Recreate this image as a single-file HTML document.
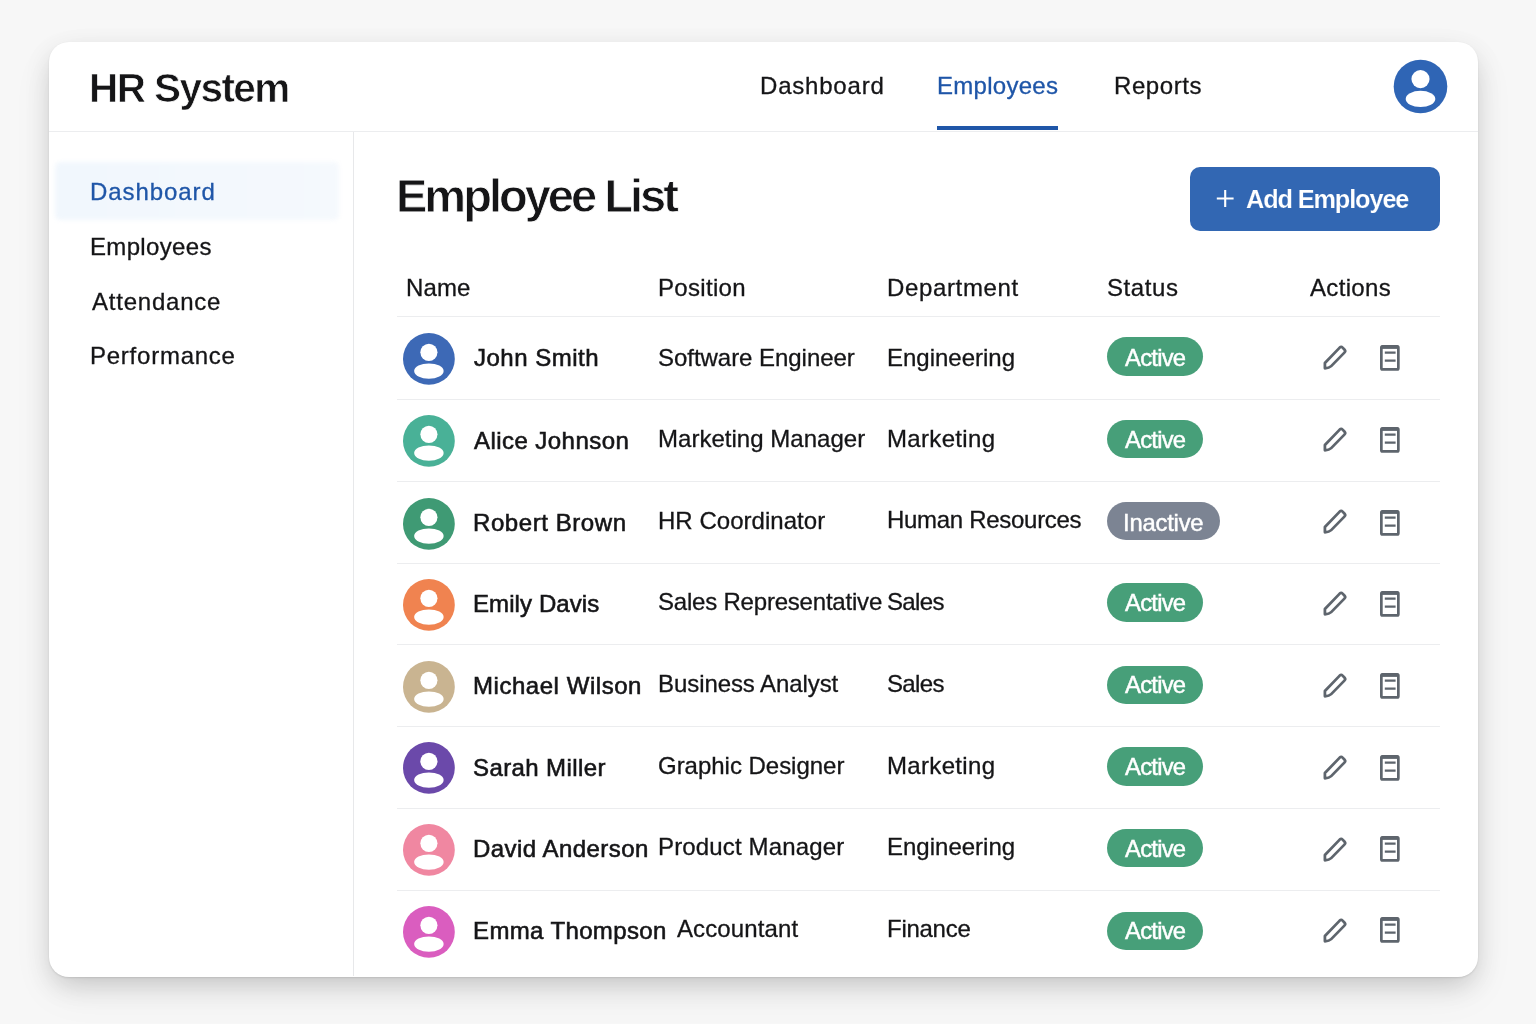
<!DOCTYPE html>
<html lang="en"><head><meta charset="utf-8"><title>HR System - Employee List</title>
<style>
html,body{margin:0;padding:0}
body{width:1536px;height:1024px;overflow:hidden;background:#f7f7f7;font-family:"Liberation Sans",Arial,sans-serif;color:#151517;position:relative}
.abs{position:absolute}
.t{position:absolute;white-space:nowrap;line-height:1;font-size:24px;will-change:transform;-webkit-text-stroke:.3px currentColor}
.card{position:absolute;left:49px;top:42px;width:1429px;height:934.5px;background:#fff;border-radius:20px;box-shadow:0 1px 2px rgba(0,0,0,.10),0 10px 28px -4px rgba(0,0,0,.19),0 16px 44px rgba(0,0,0,.05)}
.hline{position:absolute;height:1.2px;background:#ecedef}
.vline{position:absolute;width:1.1px;background:#e7e8ea}
.badge{position:absolute;border-radius:20px}
</style></head><body>
<div class="card"></div>
<div class="hline" style="left:49px;top:130.9px;width:1429px"></div>
<div class="vline" style="left:353.4px;top:132px;height:844px"></div>
<div class="abs" style="left:937.2px;top:126.2px;width:120.8px;height:3.8px;background:#1f56a8"></div>

<svg class="abs" style="left:1392px;top:58px" width="57" height="57" viewBox="-28.5 -28.5 57 57"><circle r="26.8" fill="#2f65b5"/><circle cy="-7.4" r="9.05" fill="#fff"/><ellipse cy="12.4" rx="14.8" ry="8.1" fill="#fff"/></svg>
<div class="abs" style="left:55px;top:161.5px;width:284px;height:58.5px;background:linear-gradient(90deg,#f1f7fd,#f5f9fd);border-radius:5px;filter:blur(2px)"></div>
<div class="abs" style="left:1190.4px;top:166.9px;width:249.6px;height:63.9px;border-radius:10px;background:#3267b3"></div>
<svg class="abs" style="left:1216.1px;top:189px" width="19" height="19" viewBox="0 0 19 19"><path d="M9.2 0.9V18.1M0.8 9.5H17.6" stroke="#fff" stroke-width="2.1"/></svg>

<div class="hline" style="left:397px;top:315.70px;width:1043px"></div>
<div class="hline" style="left:397px;top:399.10px;width:1043px"></div>
<div class="hline" style="left:397px;top:481.10px;width:1043px"></div>
<div class="hline" style="left:397px;top:562.90px;width:1043px"></div>
<div class="hline" style="left:397px;top:644.10px;width:1043px"></div>
<div class="hline" style="left:397px;top:725.90px;width:1043px"></div>
<div class="hline" style="left:397px;top:808.20px;width:1043px"></div>
<div class="hline" style="left:397px;top:890.30px;width:1043px"></div>
<svg class="abs" style="left:402.1px;top:331.5px" width="53.8" height="53.8" viewBox="-26.9 -26.9 53.8 53.8"><circle r="25.9" fill="#3d69b6"/><circle cy="-6.57" r="8.57" fill="#fff"/><ellipse cy="12.15" rx="14.74" ry="7.67" fill="#fff"/></svg>
<div class="badge" style="left:1106.9px;top:336.9px;width:96.5px;height:38.9px;background:#479f79"></div>
<svg class="abs" style="left:1320.6px;top:342.7px" width="28" height="29" viewBox="-2 -2 28 29"><path d="M1.9 23.3 L1.9 18.0 L16.7 2.6 Q18.2 1.2 19.6 2.6 L21.6 4.7 Q22.9 6.1 21.4 7.6 L8.2 21.1 Q6.2 23.1 1.9 23.3 Z" fill="none" stroke="#5e656d" stroke-width="2.75" stroke-linejoin="round"/></svg>
<svg class="abs" style="left:1378.3px;top:342.9px" width="24" height="30" viewBox="-2 -2 24 30"><rect x="1.35" y="1.35" width="17" height="23" rx="1.2" fill="none" stroke="#5e656d" stroke-width="2.7"/><path d="M1.4 2.2 H18.3" stroke="#5e656d" stroke-width="3.4"/><path d="M4.8 7.6 H15.6 M4.8 15.6 H15.6" stroke="#5e656d" stroke-width="2.3"/></svg>
<svg class="abs" style="left:402.1px;top:414.1px" width="53.8" height="53.8" viewBox="-26.9 -26.9 53.8 53.8"><circle r="25.9" fill="#49b197"/><circle cy="-6.57" r="8.57" fill="#fff"/><ellipse cy="12.15" rx="14.74" ry="7.67" fill="#fff"/></svg>
<div class="badge" style="left:1106.9px;top:420.3px;width:96.5px;height:38.0px;background:#479f79"></div>
<svg class="abs" style="left:1320.6px;top:425.1px" width="28" height="29" viewBox="-2 -2 28 29"><path d="M1.9 23.3 L1.9 18.0 L16.7 2.6 Q18.2 1.2 19.6 2.6 L21.6 4.7 Q22.9 6.1 21.4 7.6 L8.2 21.1 Q6.2 23.1 1.9 23.3 Z" fill="none" stroke="#5e656d" stroke-width="2.75" stroke-linejoin="round"/></svg>
<svg class="abs" style="left:1378.3px;top:425.1px" width="24" height="30" viewBox="-2 -2 24 30"><rect x="1.35" y="1.35" width="17" height="23" rx="1.2" fill="none" stroke="#5e656d" stroke-width="2.7"/><path d="M1.4 2.2 H18.3" stroke="#5e656d" stroke-width="3.4"/><path d="M4.8 7.6 H15.6 M4.8 15.6 H15.6" stroke="#5e656d" stroke-width="2.3"/></svg>
<svg class="abs" style="left:402.1px;top:496.5px" width="53.8" height="53.8" viewBox="-26.9 -26.9 53.8 53.8"><circle r="25.9" fill="#3f9a74"/><circle cy="-6.57" r="8.57" fill="#fff"/><ellipse cy="12.15" rx="14.74" ry="7.67" fill="#fff"/></svg>
<div class="badge" style="left:1106.9px;top:502.1px;width:112.9px;height:37.7px;background:#7c8493"></div>
<svg class="abs" style="left:1320.6px;top:506.9px" width="28" height="29" viewBox="-2 -2 28 29"><path d="M1.9 23.3 L1.9 18.0 L16.7 2.6 Q18.2 1.2 19.6 2.6 L21.6 4.7 Q22.9 6.1 21.4 7.6 L8.2 21.1 Q6.2 23.1 1.9 23.3 Z" fill="none" stroke="#5e656d" stroke-width="2.75" stroke-linejoin="round"/></svg>
<svg class="abs" style="left:1378.3px;top:507.6px" width="24" height="30" viewBox="-2 -2 24 30"><rect x="1.35" y="1.35" width="17" height="23" rx="1.2" fill="none" stroke="#5e656d" stroke-width="2.7"/><path d="M1.4 2.2 H18.3" stroke="#5e656d" stroke-width="3.4"/><path d="M4.8 7.6 H15.6 M4.8 15.6 H15.6" stroke="#5e656d" stroke-width="2.3"/></svg>
<svg class="abs" style="left:402.1px;top:578.1px" width="53.8" height="53.8" viewBox="-26.9 -26.9 53.8 53.8"><circle r="25.9" fill="#f08350"/><circle cy="-6.57" r="8.57" fill="#fff"/><ellipse cy="12.15" rx="14.74" ry="7.67" fill="#fff"/></svg>
<div class="badge" style="left:1106.9px;top:583.4px;width:96.5px;height:38.7px;background:#479f79"></div>
<svg class="abs" style="left:1320.6px;top:588.9px" width="28" height="29" viewBox="-2 -2 28 29"><path d="M1.9 23.3 L1.9 18.0 L16.7 2.6 Q18.2 1.2 19.6 2.6 L21.6 4.7 Q22.9 6.1 21.4 7.6 L8.2 21.1 Q6.2 23.1 1.9 23.3 Z" fill="none" stroke="#5e656d" stroke-width="2.75" stroke-linejoin="round"/></svg>
<svg class="abs" style="left:1378.3px;top:588.7px" width="24" height="30" viewBox="-2 -2 24 30"><rect x="1.35" y="1.35" width="17" height="23" rx="1.2" fill="none" stroke="#5e656d" stroke-width="2.7"/><path d="M1.4 2.2 H18.3" stroke="#5e656d" stroke-width="3.4"/><path d="M4.8 7.6 H15.6 M4.8 15.6 H15.6" stroke="#5e656d" stroke-width="2.3"/></svg>
<svg class="abs" style="left:402.1px;top:660.1px" width="53.8" height="53.8" viewBox="-26.9 -26.9 53.8 53.8"><circle r="25.9" fill="#c9b491"/><circle cy="-6.57" r="8.57" fill="#fff"/><ellipse cy="12.15" rx="14.74" ry="7.67" fill="#fff"/></svg>
<div class="badge" style="left:1106.9px;top:665.6px;width:96.5px;height:38.0px;background:#479f79"></div>
<svg class="abs" style="left:1320.6px;top:671.0px" width="28" height="29" viewBox="-2 -2 28 29"><path d="M1.9 23.3 L1.9 18.0 L16.7 2.6 Q18.2 1.2 19.6 2.6 L21.6 4.7 Q22.9 6.1 21.4 7.6 L8.2 21.1 Q6.2 23.1 1.9 23.3 Z" fill="none" stroke="#5e656d" stroke-width="2.75" stroke-linejoin="round"/></svg>
<svg class="abs" style="left:1378.3px;top:670.8px" width="24" height="30" viewBox="-2 -2 24 30"><rect x="1.35" y="1.35" width="17" height="23" rx="1.2" fill="none" stroke="#5e656d" stroke-width="2.7"/><path d="M1.4 2.2 H18.3" stroke="#5e656d" stroke-width="3.4"/><path d="M4.8 7.6 H15.6 M4.8 15.6 H15.6" stroke="#5e656d" stroke-width="2.3"/></svg>
<svg class="abs" style="left:402.1px;top:740.9px" width="53.8" height="53.8" viewBox="-26.9 -26.9 53.8 53.8"><circle r="25.9" fill="#6b49aa"/><circle cy="-6.57" r="8.57" fill="#fff"/><ellipse cy="12.15" rx="14.74" ry="7.67" fill="#fff"/></svg>
<div class="badge" style="left:1106.9px;top:747.0px;width:96.5px;height:38.7px;background:#479f79"></div>
<svg class="abs" style="left:1320.6px;top:753.0px" width="28" height="29" viewBox="-2 -2 28 29"><path d="M1.9 23.3 L1.9 18.0 L16.7 2.6 Q18.2 1.2 19.6 2.6 L21.6 4.7 Q22.9 6.1 21.4 7.6 L8.2 21.1 Q6.2 23.1 1.9 23.3 Z" fill="none" stroke="#5e656d" stroke-width="2.75" stroke-linejoin="round"/></svg>
<svg class="abs" style="left:1378.3px;top:752.8px" width="24" height="30" viewBox="-2 -2 24 30"><rect x="1.35" y="1.35" width="17" height="23" rx="1.2" fill="none" stroke="#5e656d" stroke-width="2.7"/><path d="M1.4 2.2 H18.3" stroke="#5e656d" stroke-width="3.4"/><path d="M4.8 7.6 H15.6 M4.8 15.6 H15.6" stroke="#5e656d" stroke-width="2.3"/></svg>
<svg class="abs" style="left:402.1px;top:823.2px" width="53.8" height="53.8" viewBox="-26.9 -26.9 53.8 53.8"><circle r="25.9" fill="#f087a1"/><circle cy="-6.57" r="8.57" fill="#fff"/><ellipse cy="12.15" rx="14.74" ry="7.67" fill="#fff"/></svg>
<div class="badge" style="left:1106.9px;top:828.8px;width:96.5px;height:38.5px;background:#479f79"></div>
<svg class="abs" style="left:1320.6px;top:834.5px" width="28" height="29" viewBox="-2 -2 28 29"><path d="M1.9 23.3 L1.9 18.0 L16.7 2.6 Q18.2 1.2 19.6 2.6 L21.6 4.7 Q22.9 6.1 21.4 7.6 L8.2 21.1 Q6.2 23.1 1.9 23.3 Z" fill="none" stroke="#5e656d" stroke-width="2.75" stroke-linejoin="round"/></svg>
<svg class="abs" style="left:1378.3px;top:833.9px" width="24" height="30" viewBox="-2 -2 24 30"><rect x="1.35" y="1.35" width="17" height="23" rx="1.2" fill="none" stroke="#5e656d" stroke-width="2.7"/><path d="M1.4 2.2 H18.3" stroke="#5e656d" stroke-width="3.4"/><path d="M4.8 7.6 H15.6 M4.8 15.6 H15.6" stroke="#5e656d" stroke-width="2.3"/></svg>
<svg class="abs" style="left:402.1px;top:905.2px" width="53.8" height="53.8" viewBox="-26.9 -26.9 53.8 53.8"><circle r="25.9" fill="#da5dbf"/><circle cy="-6.57" r="8.57" fill="#fff"/><ellipse cy="12.15" rx="14.74" ry="7.67" fill="#fff"/></svg>
<div class="badge" style="left:1106.9px;top:911.5px;width:96.5px;height:38.0px;background:#479f79"></div>
<svg class="abs" style="left:1320.6px;top:915.8px" width="28" height="29" viewBox="-2 -2 28 29"><path d="M1.9 23.3 L1.9 18.0 L16.7 2.6 Q18.2 1.2 19.6 2.6 L21.6 4.7 Q22.9 6.1 21.4 7.6 L8.2 21.1 Q6.2 23.1 1.9 23.3 Z" fill="none" stroke="#5e656d" stroke-width="2.75" stroke-linejoin="round"/></svg>
<svg class="abs" style="left:1378.3px;top:915.2px" width="24" height="30" viewBox="-2 -2 24 30"><rect x="1.35" y="1.35" width="17" height="23" rx="1.2" fill="none" stroke="#5e656d" stroke-width="2.7"/><path d="M1.4 2.2 H18.3" stroke="#5e656d" stroke-width="3.4"/><path d="M4.8 7.6 H15.6 M4.8 15.6 H15.6" stroke="#5e656d" stroke-width="2.3"/></svg>
<div class="t" style="left:88.65px;top:68.12px;letter-spacing:-1.565px;font-size:40.5px;font-weight:bold;-webkit-text-stroke:.7px #fff">HR System</div>
<div class="t" style="left:760.40px;top:74.38px;letter-spacing:0.798px">Dashboard</div>
<div class="t" style="left:936.65px;top:74.38px;letter-spacing:0.285px;color:#1f56a8">Employees</div>
<div class="t" style="left:1114.15px;top:74.38px;letter-spacing:0.594px">Reports</div>
<div class="t" style="left:90.25px;top:179.88px;letter-spacing:0.930px;color:#1f56a8">Dashboard</div>
<div class="t" style="left:90.25px;top:234.68px;letter-spacing:0.335px">Employees</div>
<div class="t" style="left:91.75px;top:289.58px;letter-spacing:0.780px">Attendance</div>
<div class="t" style="left:90.25px;top:344.18px;letter-spacing:0.756px">Performance</div>
<div class="t" style="left:396.40px;top:171.91px;letter-spacing:-2.983px;font-size:47px;font-weight:bold;-webkit-text-stroke:.8px #fff">Employee List</div>
<div class="t" style="left:1245.58px;top:187.18px;letter-spacing:-1.117px;font-size:25.3px;font-weight:bold;color:#fff;-webkit-text-stroke:.15px #3267b3">Add Employee</div>
<div class="t" style="left:406.15px;top:275.68px;letter-spacing:0.143px">Name</div>
<div class="t" style="left:657.65px;top:275.68px;letter-spacing:0.309px">Position</div>
<div class="t" style="left:886.75px;top:275.68px;letter-spacing:0.642px">Department</div>
<div class="t" style="left:1106.65px;top:275.68px;letter-spacing:0.592px">Status</div>
<div class="t" style="left:1310.15px;top:275.68px;letter-spacing:0.333px">Actions</div>
<div class="t" style="left:474.04px;top:345.68px;letter-spacing:0.495px;-webkit-text-stroke:.58px #151517">John Smith</div>
<div class="t" style="left:657.65px;top:345.58px;letter-spacing:-0.041px">Software Engineer</div>
<div class="t" style="left:886.95px;top:345.58px;letter-spacing:-0.005px">Engineering</div>
<div class="t" style="left:1125.32px;top:345.85px;letter-spacing:-0.744px;font-size:23.8px;color:#fff;-webkit-text-stroke:.45px #fff">Active</div>
<div class="t" style="left:473.79px;top:428.98px;letter-spacing:0.445px;-webkit-text-stroke:.58px #151517">Alice Johnson</div>
<div class="t" style="left:657.65px;top:427.48px;letter-spacing:0.027px">Marketing Manager</div>
<div class="t" style="left:886.95px;top:427.48px;letter-spacing:0.328px">Marketing</div>
<div class="t" style="left:1125.32px;top:427.55px;letter-spacing:-0.744px;font-size:23.8px;color:#fff;-webkit-text-stroke:.45px #fff">Active</div>
<div class="t" style="left:473.04px;top:510.58px;letter-spacing:0.572px;-webkit-text-stroke:.58px #151517">Robert Brown</div>
<div class="t" style="left:657.65px;top:509.08px;letter-spacing:0.035px">HR Coordinator</div>
<div class="t" style="left:886.95px;top:507.78px;letter-spacing:-0.296px">Human Resources</div>
<div class="t" style="left:1123.42px;top:511.05px;letter-spacing:-0.204px;font-size:23.8px;color:#fff;-webkit-text-stroke:.45px #fff">Inactive</div>
<div class="t" style="left:473.04px;top:592.08px;letter-spacing:0.093px;-webkit-text-stroke:.58px #151517">Emily Davis</div>
<div class="t" style="left:657.65px;top:589.98px;letter-spacing:-0.204px">Sales Representative</div>
<div class="t" style="left:886.95px;top:589.98px;letter-spacing:-0.634px">Sales</div>
<div class="t" style="left:1125.32px;top:590.75px;letter-spacing:-0.744px;font-size:23.8px;color:#fff;-webkit-text-stroke:.45px #fff">Active</div>
<div class="t" style="left:473.04px;top:673.98px;letter-spacing:0.541px;-webkit-text-stroke:.58px #151517">Michael Wilson</div>
<div class="t" style="left:657.90px;top:671.68px;letter-spacing:-0.076px">Business Analyst</div>
<div class="t" style="left:886.95px;top:671.68px;letter-spacing:-0.659px">Sales</div>
<div class="t" style="left:1125.32px;top:672.95px;letter-spacing:-0.744px;font-size:23.8px;color:#fff;-webkit-text-stroke:.45px #fff">Active</div>
<div class="t" style="left:473.04px;top:755.58px;letter-spacing:0.402px;-webkit-text-stroke:.58px #151517">Sarah Miller</div>
<div class="t" style="left:657.75px;top:753.68px;letter-spacing:-0.024px">Graphic Designer</div>
<div class="t" style="left:886.95px;top:753.68px;letter-spacing:0.328px">Marketing</div>
<div class="t" style="left:1125.32px;top:755.05px;letter-spacing:-0.744px;font-size:23.8px;color:#fff;-webkit-text-stroke:.45px #fff">Active</div>
<div class="t" style="left:473.04px;top:836.98px;letter-spacing:0.462px;-webkit-text-stroke:.58px #151517">David Anderson</div>
<div class="t" style="left:657.90px;top:835.38px;letter-spacing:0.153px">Product Manager</div>
<div class="t" style="left:886.95px;top:835.38px;letter-spacing:0.005px">Engineering</div>
<div class="t" style="left:1125.32px;top:836.65px;letter-spacing:-0.744px;font-size:23.8px;color:#fff;-webkit-text-stroke:.45px #fff">Active</div>
<div class="t" style="left:473.04px;top:918.68px;letter-spacing:0.368px;-webkit-text-stroke:.58px #151517">Emma Thompson</div>
<div class="t" style="left:677.35px;top:917.48px;letter-spacing:0.110px">Accountant</div>
<div class="t" style="left:886.95px;top:916.68px;letter-spacing:-0.273px">Finance</div>
<div class="t" style="left:1125.32px;top:918.85px;letter-spacing:-0.744px;font-size:23.8px;color:#fff;-webkit-text-stroke:.45px #fff">Active</div>
</body></html>
